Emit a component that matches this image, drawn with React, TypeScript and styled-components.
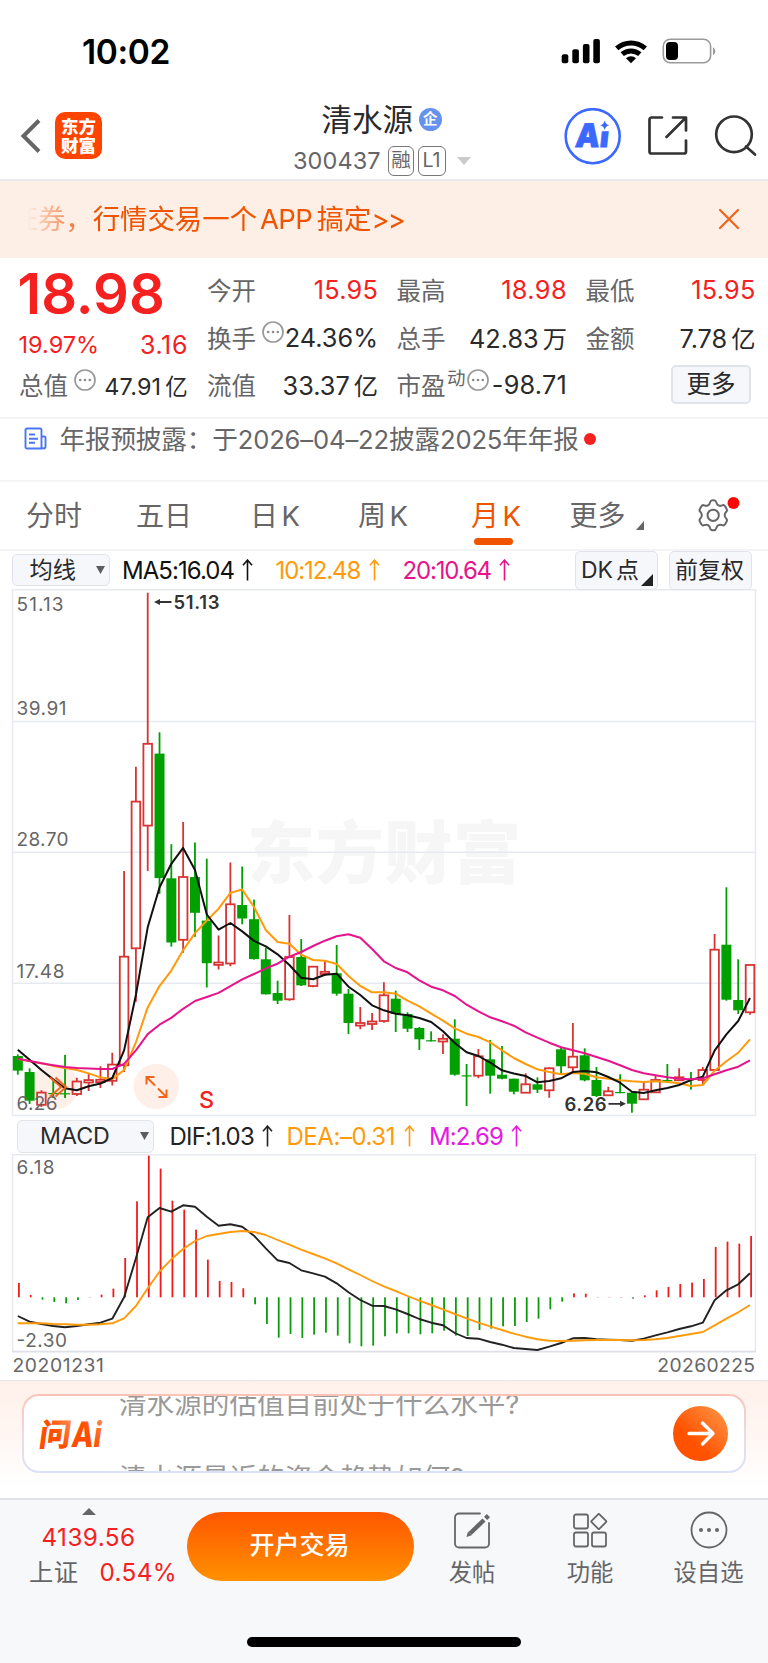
import React from "react";
import styled, { createGlobalStyle } from "styled-components";

const FONT = `Inter, "Noto Sans CJK SC", sans-serif`;
const C = {
  up: "#f52121",
  ink: "#2a2a2c",
  sub: "#666668",
  brand: "#f05400",
  line: "#e9ebf0",
  faint: "#f4f4f7",
  ma10: "#ff9a0a",
  ma20: "#e6148c",
  m: "#e31be0",
  chip: "#f6f7fa",
};

const Global = createGlobalStyle`
  * { box-sizing: border-box; }
  body { margin: 0; background: #fff; font-family: ${FONT}; -webkit-font-smoothing: antialiased; }
  svg { display: block; flex: none; }
`;

const Screen = styled.div`
  width: 768px;
  height: 1663px;
  overflow: hidden;
  display: flex;
  flex-direction: column;
  background: #fff;
  white-space: nowrap;
`;

/* status bar */
const StatusBar = styled.div`
  height: 98px;
  flex: none;
  display: flex;
  justify-content: space-between;
  padding: 31.5px 50px 0 82px;
`;
const StatusRight = styled.div`
  padding-top: 4.5px;
`;
const Clock = styled.div`
  font-size: 33.5px;
  line-height: 41px;
  font-weight: 600;
  letter-spacing: -0.4px;
  color: #000;
`;

/* navigation bar */
const NavBar = styled.header`
  height: 83px;
  flex: none;
  display: flex;
  border-bottom: 2px solid ${C.line};
`;
const NavLeft = styled.div`
  width: 256px;
  display: flex;
  align-items: flex-start;
  padding: 14px 0 0 19px;
  gap: 12px;
`;
const BackIcon = styled.svg`
  margin-top: 6px;
`;
const Logo = styled.div`
  width: 47px;
  height: 47px;
  border-radius: 10px;
  background: #ff4400;
  color: #fff;
  font-size: 17.5px;
  line-height: 19px;
  font-weight: 900;
  text-align: center;
  padding-top: 4.5px;
`;
const NavTitle = styled.div`
  width: 256px;
  padding: 3.5px 0 0 37px;
`;
const TitleRow = styled.div`
  display: flex;
  align-items: center;
  height: 36px;
`;
const Title = styled.div`
  padding-left: 28.5px;
  font-size: 30.5px;
  line-height: 36px;
  color: ${C.ink};
`;
const CorpBadge = styled.div`
  width: 23.5px;
  height: 23.5px;
  border-radius: 50%;
  margin-left: 5.5px;
  background: #6492ec;
  color: #fff;
  font-size: 14.5px;
  line-height: 22.5px;
  font-weight: 700;
  text-align: center;
`;
const CodeRow = styled.div`
  display: flex;
  align-items: center;
  margin-top: 8px;
  height: 30px;
`;
const Code = styled.div`
  width: 95px;
  font-size: 23.5px;
  letter-spacing: 0.1px;
  color: ${C.sub};
`;
const Tag = styled.div<{ $w: number }>`
  width: ${(p) => p.$w}px;
  height: 30px;
  border: 1.3px solid #77777a;
  border-radius: 6px;
  margin-right: 3.5px;
  color: ${C.sub};
  font-size: 19.5px;
  line-height: 27px;
  text-align: center;
`;
const DownMark = styled.svg`
  margin-left: 8px;
`;
const NavActions = styled.div`
  flex: 1;
  display: flex;
  align-items: flex-start;
  padding: 10px 0 0 52px;
`;
const AiMark = styled.svg`
  margin-right: 26px;
`;
const ShareIcon = styled.svg`
  margin: 6px 22px 0 0;
`;
const SearchIcon = styled.svg`
  margin-top: 5px;
`;

/* promotion banner */
const Banner = styled.div`
  height: 77px;
  flex: none;
  display: flex;
  align-items: center;
  justify-content: space-between;
  padding: 0 28.5px 1px 28px;
  background: #fdeee6;
  color: ${C.brand};
`;
const Marquee = styled.div`
  width: 500px;
  overflow: hidden;
  display: flex;
  font-size: 27.4px;
  line-height: 40px;
  mask-image: linear-gradient(90deg, transparent 0, #000 62px);
`;
const MarqueeText = styled.span`
  margin-left: -17.5px;
`;
const MarqueeApp = styled.span`
  margin: 0 4.5px 0 3px;
  letter-spacing: -0.6px;
`;
const MarqueeMore = styled.span`
  letter-spacing: -1.8px;
`;

/* quote block */
const Quote = styled.section`
  height: 161px;
  flex: none;
  display: flex;
  gap: 19px;
  padding: 0 12.5px 0 19px;
  border-bottom: 2px solid ${C.faint};
`;
const PriceCol = styled.div`
  width: 169.5px;
`;
const Price = styled.div`
  height: 68px;
  margin-left: -1.5px;
  font-size: 56px;
  line-height: 72px;
  font-weight: 600;
  color: ${C.up};
`;
const ChangeRow = styled.div`
  display: flex;
  justify-content: space-between;
  height: 40px;
  margin-left: -0.5px;
  line-height: 37px;
  font-size: 23.5px;
  color: ${C.up};
`;
const ChangeAmount = styled.span`
  font-size: 25px;
  line-height: 39px;
  letter-spacing: 0.6px;
`;
const Stats = styled.div`
  flex: 1;
  display: grid;
  grid-template-columns: 171px 170.5px 170px;
  grid-template-rows: repeat(3, 47.5px);
  column-gap: 18.5px;
  padding-top: 8px;
`;
const Stat = styled.div<{ $size?: number; $lift?: number }>`
  display: flex;
  align-items: center;
  font-size: ${(p) => p.$size ?? 25.3}px;
  height: 47.5px;
  margin-top: ${(p) => -(p.$lift ?? 0)}px;
`;
const StatLabel = styled.span`
  font-size: 24.5px;
  color: ${C.sub};
`;
const StatSup = styled.span`
  font-size: 18.5px;
  margin: -16px 0 0 1.5px;
  color: ${C.sub};
`;
const StatValue = styled.span<{ $up?: boolean; $ls?: number }>`
  margin-left: auto;
  color: ${(p) => (p.$up ? C.up : C.ink)};
  letter-spacing: ${(p) => p.$ls ?? 0}px;
`;
const Unit = styled.span`
  margin-left: 4px;
  font-size: 0.96em;
`;
const HintSvg = styled.svg<{ $ml: number }>`
  margin: -10px 0 0 ${(p) => p.$ml}px;
`;
const MoreButton = styled.button`
  width: 80px;
  height: 39px;
  margin-left: auto;
  margin-right: 4.5px;
  margin-top: 0;
  padding: 0 0 2px;
  border: 2px solid #e0e3ea;
  border-radius: 5px;
  background: ${C.chip};
  font: 24.5px/30px ${FONT};
  color: ${C.ink};
`;

/* notice line */
const Notice = styled.div`
  height: 63px;
  flex: none;
  display: flex;
  align-items: flex-start;
  padding: 1.5px 0 0 24px;
  border-bottom: 2px solid ${C.faint};
  color: ${C.sub};
  font-size: 25.6px;
  line-height: 38px;
  letter-spacing: -0.14px;
  svg { margin: 6.5px 12.5px 0 0; }
`;
const Dot = styled.i`
  width: 12px;
  height: 12px;
  border-radius: 50%;
  background: ${C.up};
  margin: 12.5px 0 0 5px;
`;

/* period tabs */
const Tabs = styled.nav`
  height: 69px;
  flex: none;
  display: flex;
  padding-left: 26px;
  border-bottom: 2px solid ${C.faint};
`;
const Tab = styled.div<{ $w: number; $on?: boolean }>`
  width: ${(p) => p.$w}px;
  display: flex;
  font-size: 28px;
  line-height: 68px;
  color: ${(p) => (p.$on ? C.brand : C.sub)};
  position: relative;
  &::after {
    content: "";
    display: ${(p) => (p.$on ? "block" : "none")};
    position: absolute;
    left: 3px;
    top: 56px;
    width: 39px;
    height: 6.5px;
    border-radius: 4px;
    background: ${C.brand};
  }
`;
const TabK = styled.span`
  margin-left: 3.5px;
  font-size: 27.5px;
`;
const TabCorner = styled.svg`
  margin: 39px 0 0 10.5px;
`;
const GearSvg = styled.svg`
  margin: 7px 0 0 -1px;
`;

/* indicator rows */
const IndicatorRow = styled.div<{ $h: number; $pl: number; $pt?: number }>`
  height: ${(p) => p.$h}px;
  flex: none;
  display: flex;
  align-items: center;
  padding-left: ${(p) => p.$pl}px;
  padding-top: ${(p) => p.$pt ?? 0}px;
`;
const Picker = styled.div<{ $w: number; $pl: number; $mr: number }>`
  width: ${(p) => p.$w}px;
  height: 32.5px;
  display: flex;
  align-items: center;
  justify-content: space-between;
  margin-right: ${(p) => p.$mr}px;
  padding: 0 4.5px 1px ${(p) => p.$pl}px;
  border: 1.5px solid #e2e4ea;
  border-radius: 5px;
  background: ${C.chip};
  font-size: 23.2px;
  line-height: 28px;
  color: ${C.ink};
`;
const Reading = styled.div<{ $w: number; $c: string; $ls: number }>`
  width: ${(p) => p.$w}px;
  display: flex;
  align-items: center;
  gap: 8.5px;
  font-size: 24px;
  letter-spacing: ${(p) => p.$ls}px;
  color: ${(p) => p.$c};
`;
const ToolButton = styled.div<{ $ml: number }>`
  width: 83px;
  height: 39px;
  margin-left: ${(p) => p.$ml}px;
  padding: 0 0 1px 5px;
  display: flex;
  align-items: center;
  gap: 3px;
  position: relative;
  border: 1.5px solid #e0e3ea;
  border-radius: 5px;
  background: ${C.chip};
  font-size: 23px;
  line-height: 30px;
  color: ${C.ink};
  svg { position: absolute; right: 4px; bottom: 3px; }
`;

const ChartSvg = styled.svg`
  font-family: ${FONT};
`;
const Dates = styled.div`
  height: 27px;
  flex: none;
  display: flex;
  justify-content: space-between;
  padding: 0 12.5px;
  font-size: 19.3px;
  line-height: 25px;
  color: ${C.sub};
`;
const DateText = styled.span<{ $ls: number }>`
  letter-spacing: ${(p) => p.$ls}px;
`;

/* assistant prompt */
const AskPanel = styled.section`
  height: 118px;
  flex: none;
  padding: 13px 22px 0;
  border-top: 1.5px solid #e4e5ea;
  background: linear-gradient(180deg, #fff0ea 0, #fff8f5 55%, #fff 90%);
`;
const AskCard = styled.div`
  height: 79px;
  border-radius: 17px;
  padding: 2px;
  background: linear-gradient(180deg, #fcc2b6 0, #efd9e2 50%, #d9e2f8 100%);
`;
const AskInner = styled.div`
  height: 75px;
  border-radius: 15px;
  background: #fff;
  display: flex;
  align-items: center;
  overflow: hidden;
`;
const AskQuestions = styled.div`
  flex: 1;
  height: 75px;
  overflow: hidden;
  padding-left: 10px;
  color: #999;
  font-size: 27.6px;
  line-height: 74.5px;
  div { margin-top: -29.5px; height: 74.5px; }
  div + div { margin-top: 0; }
`;
const GoIcon = styled.svg`
  margin-right: 16px;
`;

/* bottom bar */
const BottomBar = styled.footer`
  flex: 1;
  display: flex;
  align-items: flex-start;
  position: relative;
  border-top: 2px solid #dfe2e7;
  background: #f6f8fa;
`;
const IndexBox = styled.div`
  width: 187px;
  padding-top: 8px;
  display: flex;
  flex-direction: column;
  font-size: 24.3px;
  color: ${C.up};
`;
const IndexMark = styled.svg`
  margin-left: 82px;
`;
const IndexValue = styled.div`
  padding-left: 41.5px;
  line-height: 34px;
  margin-top: 5px;
  letter-spacing: 0.4px;
`;
const IndexRow = styled.div`
  display: flex;
  padding-left: 29px;
  line-height: 36px;
  gap: 21px;
  letter-spacing: 0.4px;
  span { color: ${C.sub}; }
`;
const TradeButton = styled.button`
  width: 227px;
  height: 69px;
  margin-top: 11.5px;
  padding: 0 2px 2px 0;
  border: 0;
  border-radius: 35px;
  background: linear-gradient(180deg, #ff5600, #ff9100);
  font: 500 25px/34px ${FONT};
  color: #fff;
`;
const Action = styled.div<{ $w: number }>`
  width: ${(p) => p.$w}px;
  padding-top: 11px;
  display: flex;
  flex-direction: column;
  align-items: center;
  gap: 6.5px;
  font-size: 23.3px;
  line-height: 34px;
  color: ${C.sub};
`;
const HomeIndicator = styled.div`
  position: absolute;
  left: 247px;
  bottom: 16.5px;
  width: 274px;
  height: 10px;
  border-radius: 5px;
  background: #000;
`;

const Hint = ({ ml }: { ml: number }) => (
  <HintSvg $ml={ml} width="22" height="22" viewBox="0 0 22 22">
    <circle cx="11" cy="11" r="10" fill="none" stroke="#999" strokeWidth="1.7" />
    {[6.2, 11, 15.8].map((x) => (
      <circle key={x} cx={x} cy="11" r="1.3" fill="#8a8a8c" />
    ))}
  </HintSvg>
);

const UpArrow = () => (
  <svg width="11" height="22" viewBox="0 0 11 22" fill="none" stroke="currentColor" strokeWidth="1.6">
    <path d="M5.5 21.5V1.5M1 6.3 5.5 1.1 10 6.3" />
  </svg>
);

const Caret = () => (
  <svg width="9" height="8" viewBox="0 0 9 8">
    <path d="M0 0h9L4.5 8z" fill="#5c5c5e" />
  </svg>
);

/* [rising, high, body top, body bottom, low] for each month */
type Candle = [number, number, number, number, number];
const candles: Candle[] = [
  [0, 1054.4, 1056, 1070.6, 1074.7], [0, 1068.3, 1072, 1100.7, 1104], [1, 1090.3, 1092.6, 1104.8, 1107],
  [0, 1080.8, 1093, 1094.2, 1098], [0, 1054.8, 1093.2, 1094.4, 1098], [1, 1077.7, 1081.5, 1094, 1096],
  [1, 1074, 1080.1, 1082.5, 1091], [1, 1066.3, 1079.8, 1082.1, 1088], [1, 1052.7, 1064.6, 1080.8, 1085.5],
  [1, 870.9, 956.7, 1065.2, 1072], [1, 766.8, 801.6, 948.3, 1001.7], [1, 592.7, 743.8, 825.6, 870.9],
  [0, 732.3, 753.6, 878, 893.9], [0, 844.2, 878.3, 942.5, 946.6], [1, 821.9, 877, 939.8, 952.7],
  [0, 842.5, 877, 912.8, 936.8], [0, 858.7, 920.6, 963.2, 987.5], [1, 935.4, 962.5, 964.9, 969.6],
  [1, 862.4, 904.3, 963.5, 966.2], [0, 866.5, 905, 918.5, 924.3], [0, 899.6, 919.2, 959.1, 959.6],
  [0, 947.7, 959.3, 994.3, 994.5], [0, 980.7, 993, 1000.7, 1004], [1, 915, 957, 999.3, 1000.7],
  [0, 939, 957, 985.3, 986], [1, 966.7, 966.7, 986, 987.3], [1, 960.3, 971.8, 974, 975.7],
  [0, 945, 973.3, 993.7, 995.7], [0, 989, 993.7, 1023, 1034], [1, 1007, 1023, 1025.6, 1029.3],
  [1, 1013, 1021.5, 1024, 1030], [1, 982.3, 995.3, 1021, 1022.7], [0, 990.7, 998.7, 1014, 1032],
  [0, 1012.3, 1014, 1028.7, 1032], [0, 1027, 1028, 1039.3, 1050], [0, 1031.3, 1040.2, 1041.4, 1041.4],
  [1, 1034.3, 1038.8, 1041.5, 1054], [0, 1019.3, 1038.7, 1074.7, 1075.7], [0, 1064, 1075.3, 1076.5, 1106],
  [1, 1049, 1056.3, 1075.7, 1078.3], [0, 1040, 1059.3, 1075.7, 1093.7], [0, 1046, 1074.7, 1078.7, 1079.3],
  [0, 1078.7, 1078.7, 1091.7, 1094.3], [1, 1073.3, 1084.3, 1092.7, 1092.7], [0, 1077.3, 1084.3, 1089.7, 1093],
  [1, 1067.3, 1068.3, 1090.3, 1097.7], [0, 1047.3, 1049.3, 1066.3, 1074], [1, 1023, 1056.7, 1067.3, 1072.3],
  [0, 1048.3, 1055.3, 1080.3, 1081.3], [0, 1067, 1080, 1096, 1097], [1, 1086.7, 1091.3, 1095.3, 1095.3],
  [0, 1074.3, 1092, 1093.2, 1093.2], [0, 1092.3, 1092.7, 1103.7, 1112.7], [1, 1081.3, 1089.7, 1099.3, 1100],
  [1, 1076, 1080, 1092.3, 1093], [0, 1064, 1080, 1081.2, 1081.2], [1, 1068.3, 1077.3, 1080.3, 1081],
  [0, 1072, 1079, 1080, 1089.7], [1, 1067, 1070, 1080, 1084], [1, 934, 949.7, 1070, 1071],
  [0, 887.3, 944.7, 999.7, 1000.7], [0, 959.3, 1000, 1010.3, 1014], [1, 965, 965, 1012.3, 1014.7],
];
const ma5 = [
  1049.7, 1059.8, 1070, 1079.4, 1088.2, 1090.3, 1086.2, 1083.5, 1078, 1050.4, 995, 927.3, 887.5, 863.8, 847.9, 869.9,
  914.5, 929.7, 923, 931.4, 940.9, 946.3, 954.3, 965, 977.7, 979.3, 974.7, 973.7, 986.7, 995, 1005.3, 1010.3, 1013.7,
  1015.3, 1018, 1022, 1031.3, 1043, 1052.3, 1056, 1062.7, 1070.3, 1073.5, 1076, 1082.3, 1081, 1078.3, 1072, 1071,
  1072.3, 1077, 1082.7, 1091.7, 1093, 1090.3, 1088, 1085, 1080, 1076.7, 1050.7, 1034.3, 1021, 998,
];
const ma10 = [
  1058.8, 1061.2, 1063.2, 1065.9, 1068, 1070, 1073.4, 1077.4, 1079.1, 1070, 1042.3, 1007.4, 986.1, 970.6, 950.3, 933.1,
  920.6, 908.7, 892.9, 889.5, 907, 930, 942, 943.7, 954.7, 960, 960.7, 964, 976, 986, 992.3, 992.3, 993.7, 1000.7,
  1006.3, 1013.7, 1020.7, 1028.3, 1033.7, 1037, 1042.3, 1050.3, 1058, 1064, 1069.3, 1072, 1074.3, 1073, 1073.7, 1077.3,
  1078.7, 1080.3, 1081.3, 1082, 1081.3, 1082, 1083.3, 1086, 1085, 1070.7, 1061.3, 1052.7, 1039.3,
];
const ma20 = [
  1058.8, 1061, 1063.2, 1065.2, 1067, 1068, 1068.6, 1069, 1069, 1063.9, 1050.4, 1034.1, 1024.7, 1017.9, 1008.8, 1001,
  997, 992.9, 986.1, 979.4, 974, 968.3, 963.7, 956.7, 952, 946, 940.7, 936.3, 934.3, 937.7, 949, 961.3, 968, 972.3,
  980.3, 986.7, 990.3, 996, 1004.7, 1011.3, 1017.3, 1021.3, 1025.7, 1032.3, 1037.7, 1042.7, 1047.3, 1050.3, 1053.3,
  1057, 1060.7, 1065.3, 1070, 1073.3, 1075.3, 1077.3, 1078.7, 1079.3, 1078.3, 1074.3, 1070.3, 1066.7, 1060.3,
];
/* histogram heights around the zero line; positive is above it */
const hist = [
  43, 7, -7, -14, -18, -8, 1, 8, 26, 118, 288, 425, 386, 290, 263, 203, 113, 49, 46, 27, -21, -80, -121, -110, -122,
  -112, -106, -115, -138, -147, -145, -117, -108, -108, -111, -108, -100, -115, -116, -98, -94, -87, -86, -74, -64, -36,
  -13, 12, 11, 1, 1, 1, -4, 6, 21, 31, 40, 44, 55, 151, 167, 161, 184,
];
const dif = [
  603, 620, 627, 633, 637, 633, 628, 623, 611, 547, 430, 307, 279, 290, 271, 275, 305, 332, 328, 335, 362, 400, 436,
  444, 466, 475, 485, 505, 532, 555, 572, 573, 583, 597, 612, 623, 631, 654, 669, 671, 681, 689, 699, 702, 705, 695,
  684, 670, 669, 673, 674, 675, 677, 671, 661, 652, 642, 634, 623, 556, 526, 508, 475,
];
const dea = [
  625, 625, 625, 627, 628, 629, 629, 628, 625, 610, 573, 520, 470, 433, 402, 378, 363, 357, 351, 348, 351, 360, 375,
  389, 404, 417, 430, 445, 463, 480, 498, 514, 528, 543, 557, 570, 583, 597, 610, 623, 634, 645, 656, 665, 673, 677,
  678, 677, 676, 675, 675, 675, 676, 675, 673, 669, 663, 657, 651, 631, 611, 592, 570,
];

const xAt = (i: number) => 17.8 + i * 11.81;
const line = (ys: number[], f: (v: number) => number = (v) => v) =>
  ys.map((y, i) => `${xAt(i).toFixed(1)},${f(y).toFixed(1)}`).join(" ");
const RED = "#d83434";
const GREEN = "#00a000";

const AxisText = ({ y, w, children }: { y: number; w: number; children: string }) => (
  <text x="16.5" y={y} fontSize="19" fill={C.sub} textLength={w}>
    {children}
  </text>
);

const KLineChart = () => (
  <ChartSvg width="768" height="528" viewBox="0 589 768 528" fill="none">
    <text x="247" y="878" fontSize="68" fontWeight="900" fill="#f6f6f7" textLength="274">东方财富</text>
    <g stroke="#e6e9f0" strokeWidth="1.5">
      <path d="M12.5 589.8H755.5V1115.6H12.5z" />
      <path d="M12.5 721.5H755.5M12.5 852.3H755.5M12.5 983.2H755.5" />
    </g>
    <circle cx="55" cy="1086.5" r="23" fill="#fef0e9" />
    <circle cx="156.3" cy="1086.5" r="22.7" fill="#fef0e9" />
    {candles.map(([rise, hi, top, bottom, lo], i) => {
      const x = xAt(i);
      if (rise) {
        return (
          <g key={i} stroke={RED} strokeWidth="1.8">
            <path d={`M${x} ${hi}V${top}M${x} ${bottom}V${lo}`} />
            <rect x={x - 4.3} y={top} width="8.6" height={bottom - top} />
          </g>
        );
      }
      return (
        <g key={i} fill={GREEN}>
          <rect x={x - 0.9} y={hi} width="1.8" height={lo - hi} />
          <rect x={x - 5} y={top} width="10" height={bottom - top} />
        </g>
      );
    })}
    <g strokeWidth="2" strokeLinejoin="round">
      <polyline points={line(ma10)} stroke={C.ma10} />
      <polyline points={line(ma5)} stroke="#111" />
      <polyline points={line(ma20)} stroke={C.ma20} />
    </g>
    <AxisText y={610.8} w={47}>51.13</AxisText>
    <AxisText y={715} w={50}>39.91</AxisText>
    <AxisText y={846} w={52}>28.70</AxisText>
    <AxisText y={978} w={48}>17.48</AxisText>
    <AxisText y={1109.5} w={41}>6.26</AxisText>
    <g fill="#333" fontSize="18.5" fontWeight="600">
      <text x="173.5" y="608.8" textLength="46">51.13</text>
      <text x="564.5" y="1110.7" textLength="42">6.26</text>
    </g>
    <g stroke="#333" strokeWidth="1.8">
      <path d="M158 602h13.5M608.5 1103.8h13" />
      <path d="M154 602l6-3v6zM626 1103.8l-6-3v6z" fill="#333" stroke="none" />
    </g>
    <g stroke="#f2651c" strokeWidth="2">
      <path d="M50 1077.5 61 1087 50 1096.5M55.5 1077.5 66 1087 55.5 1096.5" />
      <path d="M146.5 1084.5V1077H154.5M147 1077.5 155 1085.5M166.5 1089.5V1097H158.5M166 1096.5 158 1088.5" />
    </g>
    <text x="199" y="1107.5" fontSize="23.5" fontWeight="500" fill={C.up}>S</text>
  </ChartSvg>
);

const ZERO = 1297.3;
const MacdChart = () => (
  <ChartSvg width="768" height="199" viewBox="0 1154 768 199" fill="none">
    <path d="M12.5 1351V1154.8H755.5V1351" stroke="#e6e9f0" strokeWidth="1.5" />
    <path d="M12 1351.7H756" stroke="#dee0e6" strokeWidth="1.8" />
    {hist.map((h, i) => (
      <rect
        key={i}
        x={xAt(i) + 0.2}
        y={h > 0 ? ZERO - h / 3 : ZERO}
        width="1.8"
        height={Math.abs(h) / 3}
        fill={h > 0 ? "#f01c1c" : "#0a9c0a"}
      />
    ))}
    <g strokeWidth="1.9" strokeLinejoin="round">
      <polyline points={line(dif, (v) => 1115 + v / 3)} stroke="#222" />
      <polyline points={line(dea, (v) => 1115 + v / 3)} stroke={C.ma10} />
    </g>
    <AxisText y={1174.3} w={38}>6.18</AxisText>
    <AxisText y={1346.7} w={50.5}>-2.30</AxisText>
  </ChartSvg>
);

const StatusIcons = () => (
  <svg width="160" height="30" viewBox="558 36 160 30">
    {[[561.7, 54.3], [572.3, 49.3], [582.9, 44], [593.3, 39]].map(([x, y]) => (
      <rect key={x} x={x} y={y} width="6.6" height={63.2 - y} rx="2" />
    ))}
    <g fill="none" stroke="#000" strokeWidth="5">
      <path d="M616.7 48.3a21.7 21.7 0 0 1 28.6 0" />
      <path d="M622.2 54.2a13.4 13.4 0 0 1 17.6 0" />
    </g>
    <path d="M631 63.2l-5-4.9a7.2 7.2 0 0 1 10 0z" />
    <rect x="663.3" y="39.2" width="47.3" height="23.6" rx="7" fill="none" stroke="#9a9a9a" strokeWidth="1.6" />
    <rect x="666" y="42" width="12" height="18" rx="4" />
    <path d="M713 47.2a4.7 4.7 0 0 1 0 8z" fill="#9a9a9a" />
  </svg>
);

const Gear = () => (
  <GearSvg width="46" height="46" viewBox="-3 -5 46 46" fill="none" stroke="#666668">
    <g transform="translate(16.3 21.3) scale(1.2) translate(-19.1 -18.5)" strokeWidth="1.65">
      <path
        strokeLinejoin="round"
        d="M11.500 10.200c2.400 1 4.500-.2 5-2.700.3-1.300.9-1.500 2-1.500h1c1 0 1.700.2 2 1.500.6 2.500 2.800 3.700 5.100 2.700 1.200-.5 1.700-.2 2.300.7l1.200 2.100c.6 1 .6 1.700-.2 2.600-1.800 1.800-1.800 3.900 0 5.700.8.9.8 1.600.2 2.600l-1.200 2.100c-.6.9-1.100 1.200-2.300.7-2.300-1-4.500.2-5.100 2.700-.3 1.300-1 1.600-2 1.600h-1c-1.100 0-1.700-.3-2-1.600-.5-2.500-2.600-3.700-5-2.700-1.200.5-1.700.2-2.300-.7L8 23.900c-.6-1-.6-1.700.2-2.600 1.800-1.800 1.800-3.900 0-5.700-.8-.9-.8-1.600-.2-2.600l1.200-2.100c.6-.9 1.100-1.200 2.300-.7z"
      />
      <circle cx="19" cy="18.5" r="4.7" />
    </g>
    <circle cx="36.5" cy="9" r="6" fill="#fb0505" stroke="none" />
  </GearSvg>
);

export default function App() {
  return (
    <>
      <Global />
      <Screen>
        <StatusBar>
          <Clock>10:02</Clock>
          <StatusRight><StatusIcons /></StatusRight>
        </StatusBar>

        <NavBar>
          <NavLeft>
            <BackIcon width="24" height="36" viewBox="0 0 24 36" fill="none" stroke="#666" strokeWidth="4">
              <path d="M20 2.5 4.5 18 20 33.5" />
            </BackIcon>
            <Logo>东方<br />财富</Logo>
          </NavLeft>
          <NavTitle>
            <TitleRow>
              <Title>清水源</Title>
              <CorpBadge>企</CorpBadge>
            </TitleRow>
            <CodeRow>
              <Code>300437</Code>
              <Tag $w={26}>融</Tag>
              <Tag $w={28}>L1</Tag>
              <DownMark width="14" height="8" viewBox="0 0 14 8">
                <path d="M0 0h14L7 8z" fill="#cacaca" />
              </DownMark>
            </CodeRow>
          </NavTitle>
          <NavActions>
            <AiMark width="58" height="58" viewBox="0 0 58 58">
              <circle cx="28.7" cy="28.2" r="27" fill="#fff" stroke="#3b68ff" strokeWidth="2.6" />
              <text
                transform="translate(10.5 39) skewX(-6)"
                fontFamily="Inter"
                fontSize="32.5"
                fontWeight="900"
                fill="#3b68ff"
                stroke="#3b68ff"
                strokeWidth="0.8"
                textLength="33.5"
                lengthAdjust="spacingAndGlyphs"
              >
                Ai
              </text>
              <rect x="34.5" y="11" width="13" height="12.2" fill="#fff" />
              <path d="M40.7 12.500q.9 4.200 4.700 4.800-3.800.8-4.700 4.800-.9-4-4.700-4.800 3.800-.6 4.700-4.800z" fill="#3b68ff" />
            </AiMark>
            <ShareIcon
              width="42"
              height="42"
              viewBox="0 0 42 42"
              fill="none"
              stroke="#333"
              strokeWidth="2.7"
              strokeLinecap="round"
              strokeLinejoin="round"
            >
              <path d="M14 3.5H3.5A2 2 0 0 0 1.5 5.5V37.5a2 2 0 0 0 2 2H36a2 2 0 0 0 2-2V26.5M25 3.5H38V16.5M37.5 4 18.5 23" />
            </ShareIcon>
            <SearchIcon width="46" height="46" viewBox="0 0 46 46" fill="none" stroke="#333" strokeWidth="2.7">
              <circle cx="22" cy="21.3" r="17.8" />
              <path d="M34 33.5 43 41.5" strokeLinecap="round" />
            </SearchIcon>
          </NavActions>
        </NavBar>

        <Banner>
          <Marquee>
            <MarqueeText>证券，行情交易一个</MarqueeText>
            <MarqueeApp>APP</MarqueeApp>
            <span>搞定</span>
            <MarqueeMore>&gt;&gt;</MarqueeMore>
          </Marquee>
          <svg width="22" height="22" viewBox="0 0 22 22" stroke="#f0641c" strokeWidth="2.2" strokeLinecap="round">
            <path d="M2 2l18 18M20 2 2 20" />
          </svg>
        </Banner>

        <Quote>
          <PriceCol>
            <Price>18.98</Price>
            <ChangeRow>
              <span>19.97%</span>
              <ChangeAmount>3.16</ChangeAmount>
            </ChangeRow>
            <Stat $size={23.4} $lift={5}>
              <StatLabel>总值</StatLabel>
              <Hint ml={5.5} />
              <StatValue $ls={0.2}>47.91<Unit>亿</Unit></StatValue>
            </Stat>
          </PriceCol>
          <Stats>
            <Stat><StatLabel>今开</StatLabel><StatValue $up $ls={0.2}>15.95</StatValue></Stat>
            <Stat><StatLabel>最高</StatLabel><StatValue $up $ls={0.4}>18.98</StatValue></Stat>
            <Stat><StatLabel>最低</StatLabel><StatValue $up $ls={0.2}>15.95</StatValue></Stat>
            <Stat><StatLabel>换手</StatLabel><Hint ml={6} /><StatValue>24.36%</StatValue></Stat>
            <Stat><StatLabel>总手</StatLabel><StatValue>42.83<Unit>万</Unit></StatValue></Stat>
            <Stat><StatLabel>金额</StatLabel><StatValue>7.78<Unit>亿</Unit></StatValue></Stat>
            <Stat><StatLabel>流值</StatLabel><StatValue>33.37<Unit>亿</Unit></StatValue></Stat>
            <Stat><StatLabel>市盈</StatLabel><StatSup>动</StatSup><Hint ml={1} /><StatValue $ls={0.2}>-98.71</StatValue></Stat>
            <Stat><MoreButton>更多</MoreButton></Stat>
          </Stats>
        </Quote>

        <Notice>
          <svg width="23" height="23" viewBox="0 0 23 23" fill="none" stroke="#4a76f5" strokeWidth="1.9" strokeLinejoin="round">
            <path d="M17.5 21.5H3a1.5 1.5 0 0 1-1.5-1.5V3A1.5 1.5 0 0 1 3 1.5H16A1.5 1.5 0 0 1 17.5 3zM17.5 9.5h3a1 1 0 0 1 1 1V19.5a2 2 0 0 1-4 0M5 7.500h6M5 11.700h9M5 15.700h6" />
          </svg>
          <span>年报预披露：于2026–04–22披露2025年年报</span>
          <Dot />
        </Notice>

        <Tabs>
          <Tab $w={110}>分时</Tab>
          <Tab $w={114}>五日</Tab>
          <Tab $w={108}>日<TabK>K</TabK></Tab>
          <Tab $w={113}>周<TabK>K</TabK></Tab>
          <Tab $w={98.5} $on>月<TabK>K</TabK></Tab>
          <Tab $w={125}>
            更多
            <TabCorner width="8" height="9" viewBox="0 0 8 9">
              <path d="M8 0v9H0z" fill="#666" />
            </TabCorner>
          </Tab>
          <Gear />
        </Tabs>

        <IndicatorRow $h={38} $pl={12}>
          <Picker $w={98} $pl={16.5} $mr={12}>均线<Caret /></Picker>
          <Reading $w={153.5} $c="#111" $ls={-0.95}>MA5:16.04<UpArrow /></Reading>
          <Reading $w={127} $c={C.ma10} $ls={-1.1}>10:12.48<UpArrow /></Reading>
          <Reading $w={150.5} $c={C.ma20} $ls={-1.15}>20:10.64<UpArrow /></Reading>
          <ToolButton $ml={22}>
            <span>DK</span>
            <span>点</span>
            <svg width="12" height="12" viewBox="0 0 12 12"><path d="M12 0v12H0z" fill="#222" /></svg>
          </ToolButton>
          <ToolButton $ml={11}>前复权</ToolButton>
        </IndicatorRow>
        <KLineChart />

        <IndicatorRow $h={37} $pl={17} $pt={1.5}>
          <Picker $w={137} $pl={22} $mr={15.5}>MACD<Caret /></Picker>
          <Reading $w={117} $c="#222" $ls={-0.8}>DIF:1.03<UpArrow /></Reading>
          <Reading $w={142.5} $c={C.ma10} $ls={-0.45}>DEA:–0.31<UpArrow /></Reading>
          <Reading $w={120} $c={C.m} $ls={-0.9}>M:2.69<UpArrow /></Reading>
        </IndicatorRow>
        <MacdChart />
        <Dates>
          <DateText $ls={0.6}>20201231</DateText>
          <DateText $ls={0.4}>20260225</DateText>
        </Dates>

        <AskPanel>
          <AskCard>
            <AskInner>
              <svg width="85" height="44" viewBox="24 1412 85 44">
                <defs>
                  <linearGradient id="ask" x1="0" y1="1" x2="1" y2="0">
                    <stop offset="0.5" stopColor="#ff4d00" />
                    <stop offset="1" stopColor="#ff9a60" />
                  </linearGradient>
                </defs>
                <g fill="url(#ask)" fontFamily={FONT} fontWeight="900" transform="translate(0 1446) skewX(-8)">
                  <text x="38" y="0" fontSize="31.5">问</text>
                  <text x="70.5" y="0.5" fontSize="35" fontWeight="800" textLength="30" lengthAdjust="spacingAndGlyphs">Ai</text>
                </g>
              </svg>
              <AskQuestions>
                <div>清水源的估值目前处于什么水平?</div>
                <div>清水源最近的资金趋势如何?</div>
              </AskQuestions>
              <GoIcon width="55" height="55" viewBox="0 0 55 55">
                <defs>
                  <linearGradient id="go" x1="0" y1="1" x2="1" y2="0">
                    <stop offset="0.35" stopColor="#ff5200" />
                    <stop offset="1" stopColor="#ff9a4a" />
                  </linearGradient>
                </defs>
                <circle cx="27.5" cy="27.5" r="27.5" fill="url(#go)" />
                <path
                  d="M16 27.5H40M29.5 17l10.5 10.5L29.5 38"
                  fill="none"
                  stroke="#fff"
                  strokeWidth="3.4"
                  strokeLinecap="round"
                  strokeLinejoin="round"
                />
              </GoIcon>
            </AskInner>
          </AskCard>
        </AskPanel>

        <BottomBar>
          <IndexBox>
            <IndexMark width="14" height="7" viewBox="0 0 14 7">
              <path d="M7 0l7 7H0z" fill="#666" />
            </IndexMark>
            <IndexValue>4139.56</IndexValue>
            <IndexRow><span>上证</span>0.54%</IndexRow>
          </IndexBox>
          <TradeButton>开户交易</TradeButton>
          <Action $w={116}>
            <svg width="38" height="38" viewBox="0 0 38 38" fill="none" stroke="#666668" strokeWidth="1.8">
              <path d="M27 2.5H6A4 4 0 0 0 2 6.5V32.5a4 4 0 0 0 4 4H32a4 4 0 0 0 4-4V12" strokeLinecap="round" />
              <path d="M31 9 17 22.5" strokeWidth="4.4" />
              <path d="M13.5 26l1.5-5.5 3.7 3.7z" fill="#666668" stroke="none" />
              <path d="M32.6 7.4l2.8-2.8" strokeWidth="4.4" />
            </svg>
            发帖
          </Action>
          <Action $w={120}>
            <svg width="38" height="38" viewBox="0 0 38 38" fill="none" stroke="#666668" strokeWidth="1.8">
              <rect x="3" y="3.5" width="14" height="14" rx="2" />
              <rect x="3" y="21.5" width="14" height="14" rx="2" />
              <rect x="21" y="21.5" width="14" height="14" rx="2" />
              <path d="M28 2.8l7 7a1 1 0 0 1 0 1.4l-7 7a1 1 0 0 1-.4 0l-7-7a1 1 0 0 1 0-1.4l7-7z" strokeLinejoin="round" />
            </svg>
            功能
          </Action>
          <Action $w={117}>
            <svg width="38" height="38" viewBox="0 0 38 38" fill="none" stroke="#666668" strokeWidth="1.8">
              <circle cx="19" cy="19" r="17.5" />
              {[11, 19, 27].map((x) => (
                <circle key={x} cx={x} cy="19" r="2" fill="#666668" stroke="none" />
              ))}
            </svg>
            设自选
          </Action>
          <HomeIndicator />
        </BottomBar>
      </Screen>
    </>
  );
}
